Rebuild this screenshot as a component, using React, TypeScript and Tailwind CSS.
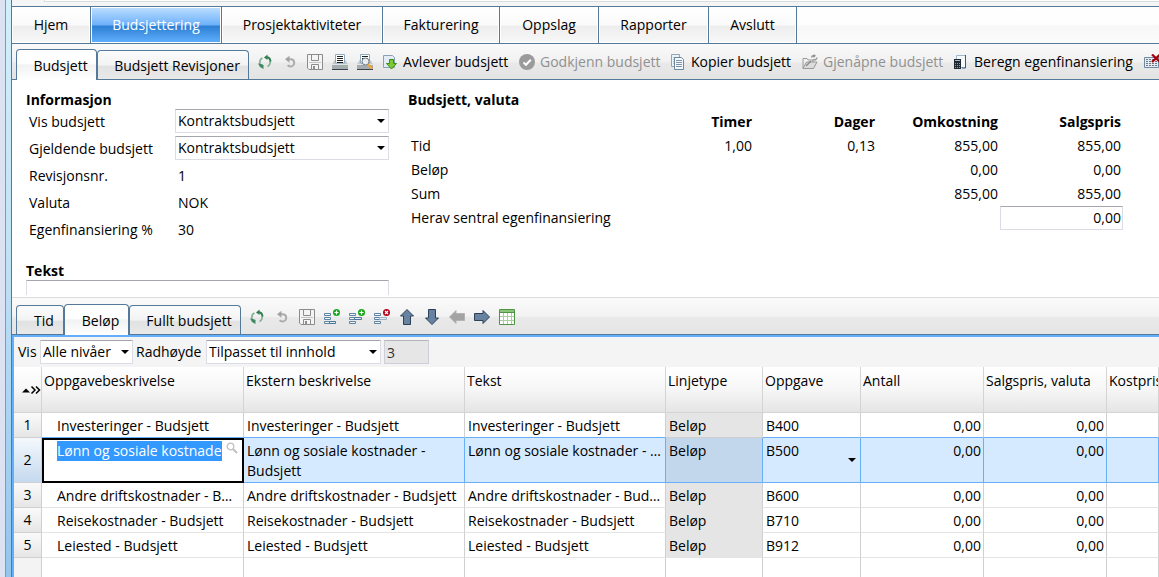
import type { ReactNode } from 'react'
import clsx from 'clsx'

const navItems = [
  { label: 'Hjem', width: 'w-[79px]' },
  { label: 'Budsjettering', width: 'w-[131px]', active: true },
  { label: 'Prosjektaktiviteter', width: 'w-[161px]' },
  { label: 'Fakturering', width: 'w-[117px]' },
  { label: 'Oppslag', width: 'w-[99px]' },
  { label: 'Rapporter', width: 'w-[110px]' },
  { label: 'Avslutt', width: 'w-[88px]' },
]

const totals = [
  { label: 'Tid', values: ['1,00', '0,13', '855,00', '855,00'] },
  { label: 'Beløp', values: ['', '', '0,00', '0,00'] },
  { label: 'Sum', values: ['', '', '855,00', '855,00'] },
]

const columns = [
  { label: 'Oppgavebeskrivelse', width: 'w-[202px]' },
  { label: 'Ekstern beskrivelse', width: 'w-[221px]' },
  { label: 'Tekst', width: 'w-[201px]' },
  { label: 'Linjetype', width: 'w-[97px]' },
  { label: 'Oppgave', width: 'w-[98px]' },
  { label: 'Antall', width: 'w-[123px]' },
  { label: 'Salgspris, valuta', width: 'w-[123px]' },
  { label: 'Kostpris, valuta', width: '' },
]

const lines = [
  { text: 'Investeringer - Budsjett', code: 'B400' },
  { text: 'Lønn og sosiale kostnader - Budsjett', code: 'B500' },
  { text: 'Andre driftskostnader - Budsjett', code: 'B600' },
  { text: 'Reisekostnader - Budsjett', code: 'B710' },
  { text: 'Leiested - Budsjett', code: 'B912' },
]

const SELECTED = 1

/* ---------- icons ---------- */

function Svg({ children, className }: { children: ReactNode; className?: string }) {
  return (
    <svg viewBox="0 0 16 16" className={clsx('size-4 shrink-0', className)} fill="none" aria-hidden="true">
      {children}
    </svg>
  )
}

function RefreshIcon() {
  return (
    <Svg>
      <path d="M5.500 4C3.500 5 2.500 7 3 9.500" stroke="#7fb092" strokeWidth="1.600" />
      <path d="M1 9.500h2l3.500 1.500v4L3 13z" fill="#3f8a60" />
      <path d="M10.500 12.500c2-1 3-3 2.500-5.500" stroke="#7fb092" strokeWidth="1.600" />
      <path d="M7 3.500L10.500.5v5.500z" fill="#2f7d50" />
      <path d="M10 3.200c2 .3 3.300 1.700 3.500 4.300" stroke="#2f7d50" strokeWidth="2" />
    </Svg>
  )
}

function UndoIcon() {
  return (
    <Svg>
      <path d="M6 5.200h2.500c2.400 0 3.700 1.500 3.700 3.500s-1.500 3.800-3.700 3.800c-1.200 0-2.200-.5-2.800-1.300" stroke="#ababab" strokeWidth="2" />
      <path d="M3 5.200L7.500 1.700v7z" fill="#a3a3a3" />
    </Svg>
  )
}

function SaveIcon() {
  return (
    <Svg>
      <path d="M.5.5h15v15H2L.5 14z" stroke="#8c8c8c" fill="#f4f4f4" />
      <path d="M4.500 1v5.500h7V1M4.500 15v-4.500h7V15" stroke="#8c8c8c" />
      <path d="M7 12v3" stroke="#8c8c8c" strokeWidth="2" />
      <path d="M2 8.500h12" stroke="#c4c4c4" />
    </Svg>
  )
}

function PrinterIcon({ preview }: { preview?: boolean }) {
  return (
    <Svg>
      <path d="M2.500 6L0 10.500h16L13.500 6z" fill="#c3c9ce" />
      <path d="M3.500.5h9V9h-9z" fill="#fff" stroke="#8fabc0" />
      <path d="M5 2.500h6M5 4.500h6M5 6.500h6M5 8.500h6" stroke="#222" />
      <path d="M0 10h16v5H0z" fill="#a4abb1" />
      <path d="M0 10.500h16" stroke="#e1e5e8" />
      <path d="M0 15.500h16" stroke="#3b4146" />
      {preview ? (
        <>
          <circle cx="8.500" cy="7.500" r="3.500" fill="#e9eef2" stroke="#707b85" />
          <path d="M11 10.200l4 4.500" stroke="#f0a72f" strokeWidth="2.400" />
        </>
      ) : (
        <path d="M11 12.500h3" stroke="#6fe05c" />
      )}
    </Svg>
  )
}

function DeliverIcon() {
  return (
    <Svg>
      <path d="M1.500 1.500h9l2 2v10h-11z" fill="#e3ecf4" stroke="#86a0b5" />
      <path d="M7.500 5.500h4v4h3L9.500 15l-5-5.500h3z" fill="#7ccb34" stroke="#3f8a14" />
    </Svg>
  )
}

function ApproveIcon() {
  return (
    <Svg>
      <circle cx="8" cy="8" r="8" fill="#9b9b9b" />
      <path d="M4.500 8.500l2.500 2.300 4.800-5" stroke="#fff" strokeWidth="2" />
    </Svg>
  )
}

function CopyIcon() {
  return (
    <Svg>
      <path d="M1.500.5h8v12h-8z" fill="#eef3f7" stroke="#8fa5b8" />
      <path d="M3 3.500h2M3 5.500h2M3 7.500h2M3 9.500h2" stroke="#b4c3d0" />
      <path d="M4.500 3.500h7l2 2v10h-9z" fill="#f5f8fb" stroke="#6d879d" />
      <path d="M6 6.500h6M6 8.500h6M6 10.500h6M6 12.500h6" stroke="#7d95aa" />
    </Svg>
  )
}

function ReopenIcon() {
  return (
    <Svg>
      <path d="M1 14.500V4.500h4l1 1.500h5v2" stroke="#989898" />
      <path d="M1 14.500l3.500-6.500H15l-3.500 6.500z" fill="#dcdcdc" stroke="#989898" />
      <path d="M4 12l5-5" stroke="#8a8a8a" strokeWidth="1.500" />
      <path d="M9.500 3.500C10 1.500 12 1 13.500 2M15 3.500c-.3 2-2 2.800-4 2.200" stroke="#8f8f8f" strokeWidth="1.300" />
      <path d="M13 0v3.200h-2.500z" fill="#8f8f8f" />
    </Svg>
  )
}

function CalculateIcon() {
  return (
    <Svg>
      <path d="M3.500 1.500h9v12h-9z" fill="#f5f9fc" stroke="#9fb7ca" />
      <path d="M12.500 1v13H9" stroke="#2f5c86" />
      <path d="M1 5h7v10H1z" fill="#1f2933" />
      <path d="M2 6.500h5" stroke="#9fb3c4" />
      <path d="M2 9.500h5M2 11.500h5M2 13.500h5" stroke="#8b98a3" strokeDasharray="1 1" />
    </Svg>
  )
}

function DeleteSheetIcon() {
  return (
    <Svg>
      <path d="M.5 3.500h14v10H.5z" fill="#e4ebf1" stroke="#6e8aa3" />
      <path d="M2 5.500h11M2 7.500h11M2 9.500h11M2 11.500h11" stroke="#6a7680" strokeDasharray="2 1" />
      <path d="M8 .5l8 7.500M16 .5L8 8" stroke="#a3000c" strokeWidth="2.200" />
    </Svg>
  )
}

function LineIcon({ kind }: { kind: 'append' | 'insert' | 'delete' }) {
  const badge = kind === 'delete' ? '#b3001b' : '#17a81a'
  return (
    <Svg>
      <path d="M.5 4.500h6v2h-6zM.5 8.500h6v2h-6zM.5 12.500h6v2h-6z" fill="#f3f7fa" stroke="#5e84a3" />
      {kind === 'append' ? (
        <path d="M5.500 12.500h6v2h-6z" fill="#e4edf4" stroke="#4d7594" />
      ) : (
        <path d="M5.500 8.500h7v2h-7z" fill="#e4edf4" stroke={kind === 'delete' ? '#9db3c5' : '#4d7594'} />
      )}
      <circle cx="12.500" cy="3.500" r="3.500" fill={badge} />
      {kind === 'delete' ? (
        <path d="M11 2l3 3M14 2l-3 3" stroke="#fff" strokeWidth="1.200" />
      ) : (
        <path d="M10.500 3.500h4M12.500 1.500v4" stroke="#fff" strokeWidth="1.200" />
      )}
    </Svg>
  )
}

function ArrowIcon({ className, muted }: { className?: string; muted?: boolean }) {
  return (
    <Svg className={className}>
      <path
        d="M8 .5L14.500 7H11.500v8.500h-7V7h-3z"
        fill={muted ? '#a3a3a3' : '#67839f'}
        stroke={muted ? '#b3b3b3' : '#2b4059'}
      />
    </Svg>
  )
}

function SheetIcon() {
  return (
    <Svg>
      <path d="M.5.5h15v15H.5z" fill="#fff" stroke="#4f9440" />
      <path d="M1 2h14" stroke="#8cc47c" strokeWidth="2" />
      <path d="M1 3.500h14" stroke="#4f9440" />
      <path d="M1 7.500h14M1 11.500h14M4.500 4v11M8.500 4v11M12.500 4v11" stroke="#a9cf9e" />
    </Svg>
  )
}

function Caret({ className }: { className?: string }) {
  return (
    <svg viewBox="0 0 8 4" className={clsx('w-2 h-1', className)} aria-hidden="true">
      <path d="M0 0h8L4 4z" fill="#000" />
    </svg>
  )
}

/* ---------- controls ---------- */

function Tool({ label, children, width, disabled, showLabel }: {
  label: string
  children: ReactNode
  width?: string
  disabled?: boolean
  showLabel?: boolean
}) {
  return (
    <button
      type="button"
      aria-label={label}
      disabled={disabled}
      className={clsx('flex shrink-0 items-center gap-[5px] whitespace-nowrap disabled:text-[#909090]', width ?? 'w-[25px]')}
    >
      {children}
      {showLabel && <span>{label}</span>}
    </button>
  )
}

function Tab({ label, width, active }: { label: string; width: string; active?: boolean }) {
  return (
    <button
      type="button"
      role="tab"
      aria-selected={!!active}
      className={clsx(
        'rounded-t-[4px] border border-b-0 border-[#557a99] pt-px text-center whitespace-nowrap',
        width,
        active
          ? '-mb-px h-[31px] pl-2 bg-[linear-gradient(#fff,#fff_45%,#f2f2f2_50%,#fff)]'
          : 'h-[29px] pl-2 bg-[linear-gradient(#fbfbfb,#f3f3f3_50%,#e2e2e2_55%,#e9e9e9)]',
      )}
    >
      {label}
    </button>
  )
}

function Select({ id, value, className }: { id: string; value: string; className?: string }) {
  return (
    <div className={clsx('relative leading-5', className)}>
      <select
        id={id}
        className="block h-6 w-full appearance-none border border-[#dcdce6] border-t-[#a6a6ae] bg-white pl-[2px] pr-4"
      >
        <option>{value}</option>
      </select>
      <Caret className="pointer-events-none absolute right-1 top-[10px]" />
    </div>
  )
}

/* ---------- sections ---------- */

function MainNav() {
  return (
    <nav className="flex h-[38px] shrink-0 border-y border-[#557a99] bg-[linear-gradient(#fff,#fdfdfd_50%,#f7f7f7_52%,#fcfcfc)]">
      {navItems.map((item) => (
        <button
          key={item.label}
          type="button"
          className={clsx(
            'shrink-0 border-r border-r-[#557a99] pb-px shadow-[inset_0_0_0_1px_#fff]',
            item.width,
            item.active
              ? 'bg-[linear-gradient(#bfe0ff,#6cb0fa_50%,#2c7fd3_53%,#62b0ff)] text-white'
              : 'bg-[linear-gradient(#fff,#fafafa_50%,#ededed_53%,#f8f8f8)]',
          )}
        >
          {item.label}
        </button>
      ))}
    </nav>
  )
}

function BudgetToolbar() {
  return (
    <div className="flex h-9 shrink-0 items-end border-b border-[#557a99] bg-[linear-gradient(#fafafa,#f1f1f1_50%,#e9e9e9_55%,#e3e3e3)] pl-1">
      <div role="tablist" className="flex items-end">
        <Tab label="Budsjett" width="w-[81px]" active />
        <Tab label="Budsjett Revisjoner" width="w-[152px]" />
      </div>
      <div className="flex min-w-0 flex-1 self-stretch overflow-hidden pl-2">
        <Tool label="Oppdater"><RefreshIcon /></Tool>
        <Tool label="Angre" disabled><UndoIcon /></Tool>
        <Tool label="Lagre" disabled><SaveIcon /></Tool>
        <Tool label="Skriv ut"><PrinterIcon /></Tool>
        <Tool label="Forhåndsvis"><PrinterIcon preview /></Tool>
        <Tool label="Avlever budsjett" width="w-[137px]" showLabel><DeliverIcon /></Tool>
        <Tool label="Godkjenn budsjett" width="w-[151px]" disabled showLabel><ApproveIcon /></Tool>
        <Tool label="Kopier budsjett" width="w-[132px]" showLabel><CopyIcon /></Tool>
        <Tool label="Gjenåpne budsjett" width="w-[151px]" disabled showLabel><ReopenIcon /></Tool>
        <Tool label="Beregn egenfinansiering" width="w-[191px]" showLabel><CalculateIcon /></Tool>
        <Tool label="Slett budsjett"><DeleteSheetIcon /></Tool>
      </div>
    </div>
  )
}

function InfoForm() {
  return (
    <form className="w-[363px] shrink-0">
      <h2 className="h-4 font-bold leading-4">Informasjon</h2>
      <div className="grid grid-cols-[149px_1fr] gap-y-[3px] pt-px leading-[26px] *:h-6">
        <label htmlFor="vis" className="pl-[3px]">Vis budsjett</label>
        <Select id="vis" value="Kontraktsbudsjett" />
        <label htmlFor="gjeldende" className="pl-[3px]">Gjeldende budsjett</label>
        <Select id="gjeldende" value="Kontraktsbudsjett" />
        <span className="pl-[3px]">Revisjonsnr.</span>
        <span className="pl-[3px]">1</span>
        <span className="pl-[3px]">Valuta</span>
        <span className="pl-[3px]">NOK</span>
        <span className="pl-[3px]">Egenfinansiering %</span>
        <span className="pl-[3px]">30</span>
      </div>
      <label htmlFor="tekst" className="mt-[21px] block h-[18px] font-bold leading-[18px]">Tekst</label>
      <textarea
        id="tekst"
        className="block h-[15px] w-full resize-none border border-b-0 border-[#dcdce6] border-t-[#a6a6ae] outline-none"
      />
    </form>
  )
}

function TotalsTable() {
  return (
    <section>
      <h2 className="h-4 font-bold leading-4">Budsjett, valuta</h2>
      <table className="mt-0.5 table-fixed leading-6">
        <colgroup>
          <col className="w-[223px]" />
          <col className="w-[123px]" />
          <col className="w-[123px]" />
          <col className="w-[123px]" />
          <col className="w-[123px]" />
        </colgroup>
        <thead>
          <tr>
            <td />
            <th className="pr-[2px] text-right">Timer</th>
            <th className="pr-[2px] text-right">Dager</th>
            <th className="pr-[2px] text-right">Omkostning</th>
            <th className="pr-[2px] text-right">Salgspris</th>
          </tr>
        </thead>
        <tbody>
          {totals.map((row) => (
            <tr key={row.label}>
              <th className="pl-[3px] text-left font-normal">{row.label}</th>
              {row.values.map((value, i) => (
                <td key={i} className="pr-[2px] text-right">{value}</td>
              ))}
            </tr>
          ))}
          <tr>
            <th className="pl-[3px] text-left font-normal" colSpan={4}>
              <label htmlFor="sentral">Herav sentral egenfinansiering</label>
            </th>
            <td>
              <input
                id="sentral"
                defaultValue="0,00"
                className="block h-6 w-full border border-[#dcdce6] border-t-[#a6a6ae] bg-white pr-px text-right"
              />
            </td>
          </tr>
        </tbody>
      </table>
    </section>
  )
}

function LinesToolbar() {
  return (
    <div className="flex h-[38px] shrink-0 items-end border-y border-t-[#dcdcdc] border-b-[#557a99] bg-[linear-gradient(#fafafa,#f3f3f3_50%,#e9e9e9_55%,#e5e5e5)] pl-1">
      <div role="tablist" className="flex items-end">
        <Tab label="Tid" width="w-[48px]" />
        <Tab label="Beløp" width="w-[65px]" active />
        <Tab label="Fullt budsjett" width="w-[112px]" />
      </div>
      <div className="flex self-stretch pl-2 pt-[2px]">
        <Tool label="Oppdater"><RefreshIcon /></Tool>
        <Tool label="Angre" disabled><UndoIcon /></Tool>
        <Tool label="Lagre" disabled><SaveIcon /></Tool>
        <Tool label="Legg til linje"><LineIcon kind="append" /></Tool>
        <Tool label="Sett inn linje"><LineIcon kind="insert" /></Tool>
        <Tool label="Slett linje"><LineIcon kind="delete" /></Tool>
        <Tool label="Flytt opp"><ArrowIcon /></Tool>
        <Tool label="Flytt ned"><ArrowIcon className="rotate-180" /></Tool>
        <Tool label="Rykk ut" disabled><ArrowIcon className="-rotate-90" muted /></Tool>
        <Tool label="Rykk inn"><ArrowIcon className="rotate-90" /></Tool>
        <Tool label="Vis som regneark"><SheetIcon /></Tool>
      </div>
    </div>
  )
}

function FilterBar() {
  return (
    <div className="flex h-[30px] shrink-0 items-center bg-[#f4f4f4] pl-1">
      <label htmlFor="nivaa" className="w-[22px]">Vis</label>
      <Select id="nivaa" value="Alle nivåer" className="w-[93px]" />
      <label htmlFor="radhoyde" className="w-[73px] whitespace-nowrap pl-[3px]">Radhøyde</label>
      <Select id="radhoyde" value="Tilpasset til innhold" className="w-[175px]" />
      <input
        aria-label="Antall linjer"
        defaultValue="3"
        readOnly
        className="ml-[3px] h-6 w-[45px] border border-[#cfcfda] border-t-[#b4b4ba] bg-[#e6e6e6] pl-[2px] text-[#333]"
      />
    </div>
  )
}

function LinesTable() {
  return (
    <div className="min-h-0 flex-1 overflow-hidden">
      <table className="w-full table-fixed border-separate border-spacing-0 leading-5">
        <colgroup>
          <col className="w-[28px]" />
          {columns.map((col) => (
            <col key={col.label} className={col.width} />
          ))}
        </colgroup>
        <thead>
          <tr className="h-[46px] bg-[linear-gradient(#fff,#f6f6f6_50%,#e4e4e4)]">
            <th className="border-b border-r border-[#d4d4d4] font-normal">
              <svg viewBox="0 0 20 10" className="ml-[7px] h-[10px] w-5" aria-hidden="true">
                <path d="M1 7.500h8L5 3.500z" fill="#000" />
                <path d="M10.500 1.500l3.500 3.500-3.500 3.500M15 1.500l3.500 3.500-3.500 3.500" fill="none" stroke="#000" strokeWidth="1.500" />
              </svg>
            </th>
            {columns.map((col) => (
              <th
                key={col.label}
                className="overflow-hidden whitespace-nowrap border-b border-r border-[#d4d4d4] pl-[2px] pt-1 text-left align-top font-normal"
              >
                {col.label}
              </th>
            ))}
          </tr>
        </thead>
        <tbody>
          {lines.map((line, i) => {
            const selected = i === SELECTED
            const cell = clsx(
              'border-b border-r pt-[3px] pl-[3px] align-top',
              selected ? 'border-[#66b0fb] bg-[#d6eaff]' : 'border-r-[#d0d0d0]',
              !selected && (i === SELECTED - 1 ? 'border-b-[#66b0fb]' : 'border-b-[#e4e4e4]'),
            )
            return (
              <tr key={line.code} className={selected ? 'h-[45px]' : 'h-[25px]'}>
                <th
                  className={clsx(
                    'border-b border-r border-[#d0d0d0] text-center font-normal',
                    selected
                      ? 'bg-[linear-gradient(#f4f8fc,#c5d9ef)]'
                      : 'bg-[linear-gradient(#fafafa,#e6e6e6)]',
                  )}
                >
                  {i + 1}
                </th>
                {selected ? (
                  <td className="border-2 border-black bg-white pl-[13px] pt-px align-top">
                    <div className="flex gap-1">
                      <input
                        aria-label="Oppgavebeskrivelse"
                        defaultValue={line.text}
                        className="h-5 w-[165px] bg-[#3399ff] text-white"
                      />
                      <svg viewBox="0 0 12 12" className="mt-px size-3 shrink-0" fill="none" stroke="#c0c0c0" aria-hidden="true">
                        <circle cx="4.500" cy="4.500" r="3.300" strokeWidth="1.300" />
                        <path d="M7 7l4 4" strokeWidth="2" />
                      </svg>
                    </div>
                  </td>
                ) : (
                  <td className={clsx(cell, 'truncate pl-[15px] pr-2')}>{line.text}</td>
                )}
                <td className={cell}>{line.text}</td>
                <td className={clsx(cell, 'truncate pr-[2px]')}>{line.text}</td>
                <td className={clsx(cell, selected ? '!bg-[#c2d6ec]' : 'border-b-[#cfcfcf] bg-[#e5e5e5]')}>Beløp</td>
                <td className={cell}>
                  {selected ? (
                    <div className="flex justify-between pr-1">
                      {line.code}
                      <Caret className="mt-[17px]" />
                    </div>
                  ) : (
                    line.code
                  )}
                </td>
                <td className={clsx(cell, 'pr-[2px] text-right')}>0,00</td>
                <td className={clsx(cell, 'pr-[2px] text-right')}>0,00</td>
                <td className={cell} />
              </tr>
            )
          })}
          {/* column rules run on below the last line */}
          <tr className="h-screen">
            <td className="border-r border-[#d0d0d0] bg-[#f3f3f3]" />
            {columns.map((col) => (
              <td key={col.label} className="border-r border-[#d0d0d0]" />
            ))}
          </tr>
        </tbody>
      </table>
    </div>
  )
}

export default function App() {
  return (
    <div className="flex h-screen overflow-hidden bg-white font-['Open_Sans','Noto_Sans',sans-serif] text-[14px] leading-5 text-black">
      <div className="w-[5px] shrink-0 bg-[#dce2f2]" />
      <div className="w-[7px] shrink-0 border-l border-r border-l-[#8d97a5] border-r-[#4f7ba0] bg-[linear-gradient(#d0f0fa,#bfe2f6_45%,#92c6ee)]" />
      <div className="flex min-w-0 flex-1 flex-col">
        <div className="h-[6px] shrink-0 bg-[#f5f5f5] pl-8">
          <div className="h-[2px] border-b border-l border-[#dcdcdc] bg-white" />
        </div>
        <MainNav />
        <BudgetToolbar />
        <main className="flex shrink-0 gap-[19px] pb-[2px] pl-[14px] pt-3">
          <InfoForm />
          <TotalsTable />
        </main>
        <LinesToolbar />
        <section className="flex min-h-0 flex-1 flex-col border-l-2 border-t-2 border-[#62b0fb]">
          <FilterBar />
          <LinesTable />
        </section>
      </div>
    </div>
  )
}
